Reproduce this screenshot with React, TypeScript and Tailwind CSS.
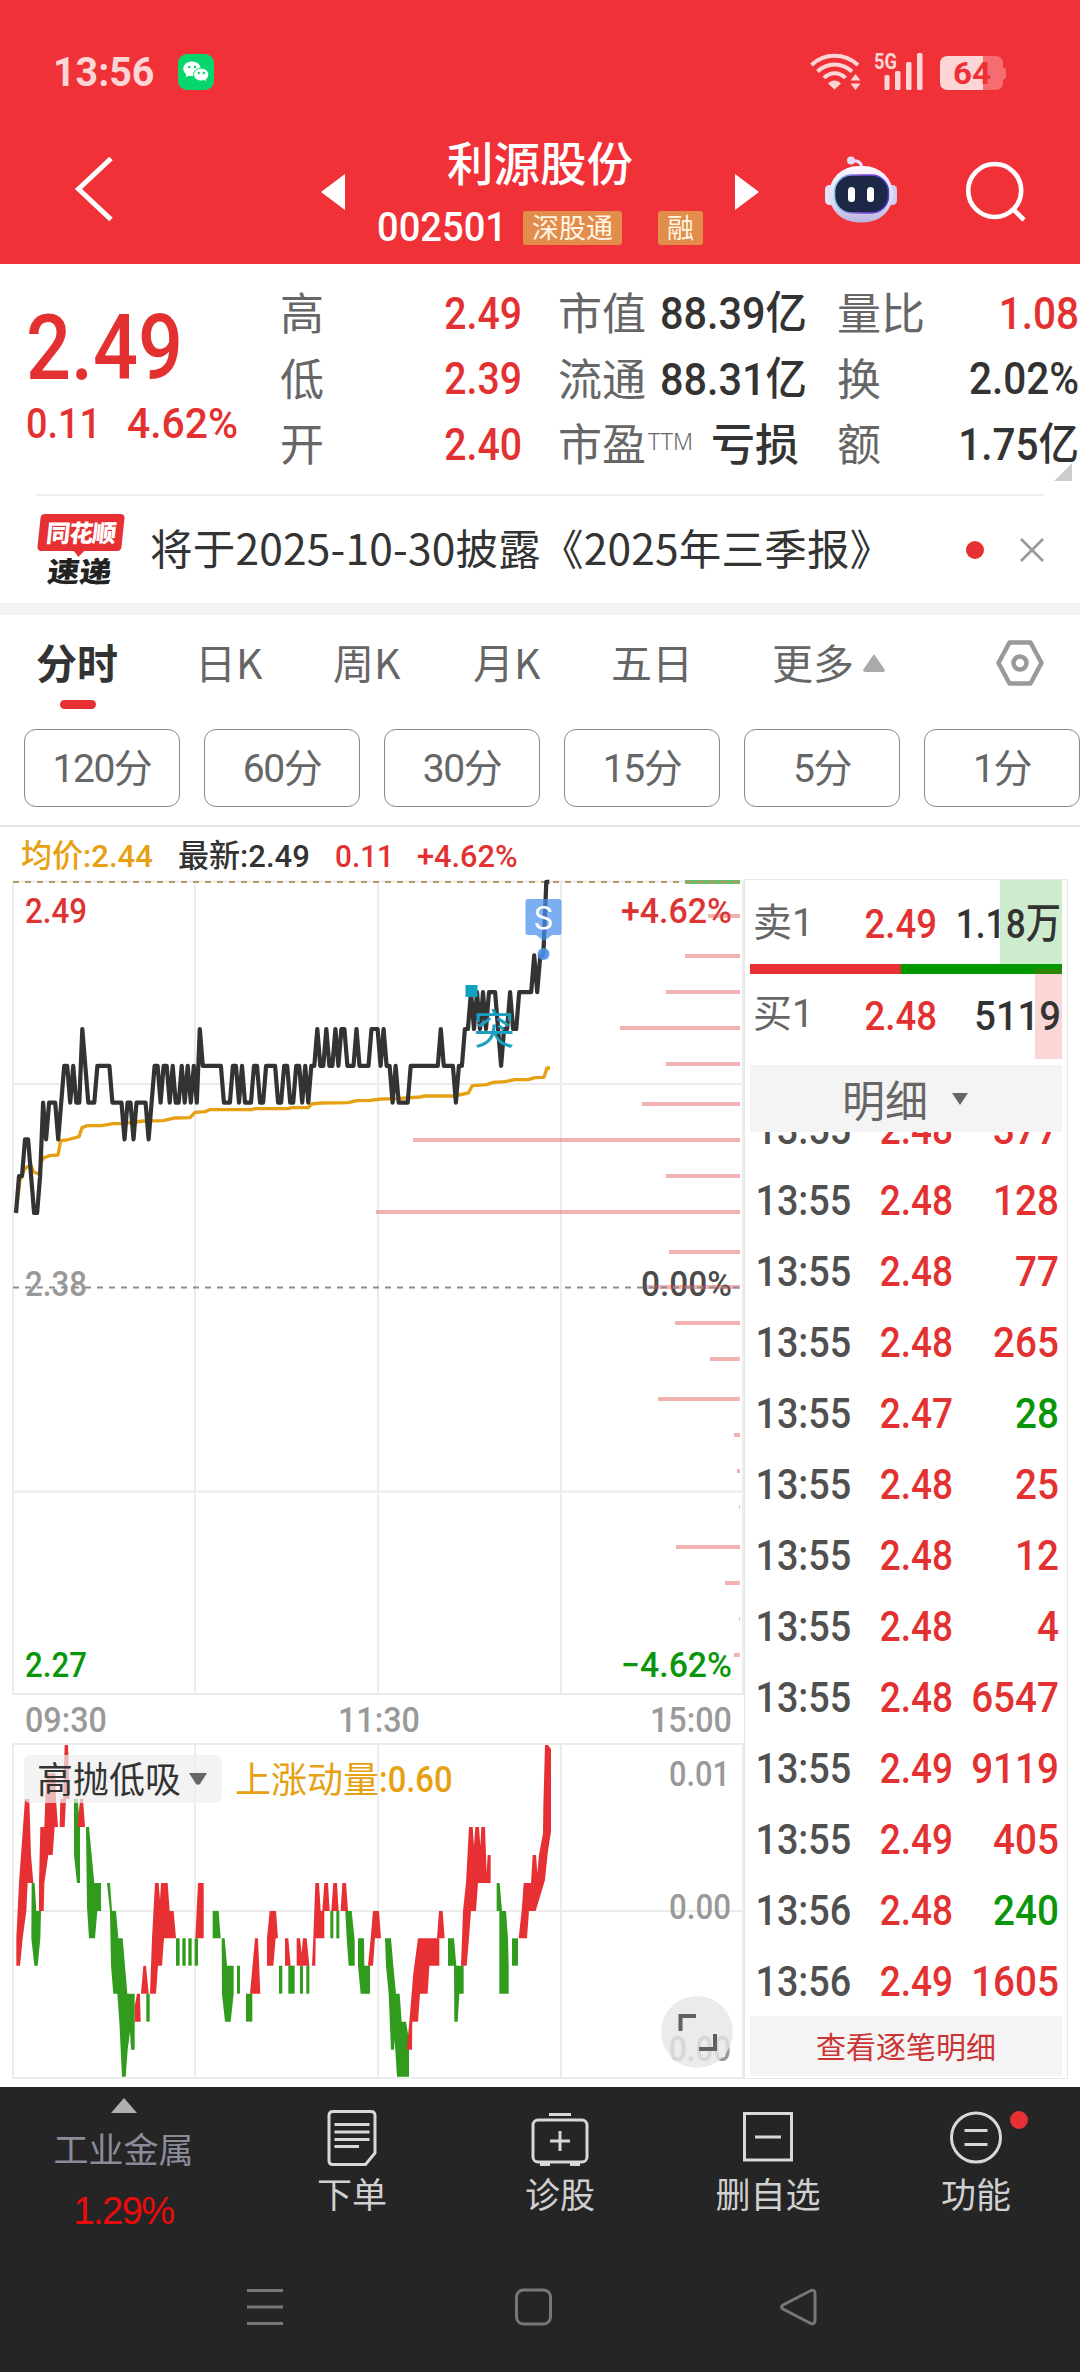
import clsx from 'clsx'
import type { ReactNode } from 'react'

const SANS = "font-['Noto_Sans_CJK_SC',sans-serif]"
const DIGITS = "font-['Roboto','Noto_Sans_CJK_SC',sans-serif]"

interface NumProps {
  children: ReactNode
  className?: string
  squeeze?: string
  from?: 'left' | 'right'
}

// Condensed figures, squeezed towards the side they are aligned to
function Num({ children, className, squeeze = 'scale-x-[.88]', from = 'left' }: NumProps) {
  return (
    <span
      className={clsx(
        DIGITS,
        'inline-block whitespace-nowrap',
        squeeze,
        from === 'left' ? 'origin-left' : 'origin-right',
        className ?? '',
        !className?.includes('font-bold') && 'font-medium',
      )}
    >
      {children}
    </span>
  )
}

// Last price of every minute since the open, in cents above 2.40
const MINUTES =
  '0112210013' +
  '2333234434' +
  '3354333444' +
  '4433332332' +
  '3333234434' +
  '4343343434' +
  '3544444443' +
  '3344343334' +
  '4334444334' +
  '4334434344' +
  '5445445455' +
  '4445444455' +
  '5454434333' +
  '3444444444' +
  '4544443445' +
  '5656565666' +
  '5455655666' +
  '66767799'

const pricePoints = MINUTES.split('')
  .map((c, i) => `${(16 + i * 3.013).toFixed(1)},${(334 - Number(c) * 36.8).toFixed(1)}`)
  .join(' ')

const AVERAGE =
  '48,1058 60,960 75,925 93,915 100,935 118,943 124,905 132,893 150,887 174,885 182,842 200,840 237,830 246,803 262,797 305,797 340,791 365,791 430,783 490,782 525,774 570,773 585,757 615,755 628,749 755,749 765,746 865,746 875,743 925,743 935,732 965,729 1045,728 1070,722 1110,721 1145,717 1190,716 1260,711 1275,708 1360,708 1405,699 1417,677 1460,674 1480,667 1515,665 1545,659 1585,659 1605,653 1632,652 1641,624 1650,624'

// Volume by price: [y, left edge]
const VOLUME: [number, number][] = [
  [37, 708], [77, 685], [113, 666], [149, 620], [185, 666], [225, 642], [261, 413],
  [297, 666], [333, 376], [373, 669], [408, 647], [444, 675], [480, 710], [520, 658],
  [556, 734], [592, 737], [628, 739], [668, 676], [704, 725], [740, 739], [776, 734],
]

const RISE = [
  '49,977 49,895 57,729 63,645 75,477 88,477 93,645 100,729 83,729 79,813 68,895 60,977',
  '117,813 117,729 121,561 133,561 136,477 140,400 166,400 168,477 174,561 164,561 158,645 145,645 133,729 131,813',
  '179,561 181,477 189,477 194,315 204,315 209,477 198,477 194,561',
  '233,561 240,477 249,477 255,561',
  '404,1145 404,1100 411,1061 420,1061 422,1145',
  '423,1061 430,977 438,977 446,1061',
  '450,1061 456,895 465,729 476,729 480,780 483,729 503,729 509,813 521,813 528,895 492,895 486,977 474,977 468,1061',
  '586,895 594,729 611,729 611,895',
  '750,1061 765,895 774,895 781,1061',
  '801,977 801,895 809,813 828,813 834,895 827,895 820,977',
  '855,977 855,895 865,895 872,977',
  '890,977 890,895 900,895 905,940 909,895 920,895 928,977',
  '936,977 940,895 946,729 957,729 962,813 973,813 973,895 947,895 946,977',
  '967,813 973,729 984,729 989,813',
  '994,813 1000,729 1011,729 1016,813',
  '1022,813 1027,729 1038,729 1044,813',
  '1104,977 1112,895 1119,813 1137,813 1143,895 1125,895 1119,977',
  '1220,1229 1228,1145 1240,1000 1254,895 1318,895 1318,977 1288,977 1283,1061 1260,1061 1254,1145 1237,1145 1236,1229',
  '1311,895 1317,813 1328,813 1334,895',
  '1383,977 1389,813 1398,729 1407,561 1418,561 1422,617 1426,561 1437,561 1441,617 1444,561 1455,561 1460,700 1463,645 1472,645 1472,729 1434,729 1428,813 1413,813 1407,895 1400,977',
  '1556,895 1565,813 1571,729 1593,729 1598,645 1608,645 1612,700 1617,645 1629,580 1630,500 1635,315 1644,315 1653,327 1653,575 1643,640 1635,720 1607,813 1587,813 1581,895',
]

const FALL = [
  '95,729 104,729 109,813 123,813 121,895 113,977 103,977 94,895',
  '222,477 233,477 240,560 240,729 231,729 222,645',
  '258,561 267,561 275,645 283,729 303,729 303,813 292,813 285,895 267,895 261,800',
  '321,729 330,729 336,813 348,813 355,895 368,895 375,977 382,1061 404,1061 404,1229 393,1229 390,1175 383,1229 377,1310 366,1310 358,1145 352,1061 340,1061 333,977 330,813',
  '528,895 539,895 539,977 528,977',
  '547,895 557,895 557,977 547,977',
  '565,895 575,895 575,977 565,977',
  '584,895 594,895 594,977 584,977',
  '711,977 720,977 720,1061 711,1061',
  '837,977 847,977 847,1061 837,1061',
  '865,977 884,977 884,1061 865,1061',
  '900,977 909,977 909,1061 900,1061',
  '919,977 928,977 928,1061 919,1061',
  '439,1061 449,1061 449,1145 439,1145',
  '738,1061 757,1061 757,1145 738,1145',
  '991,813 1000,813 1000,895 991,895',
  '1009,813 1018,813 1018,895 1009,895',
  '638,895 638,813 656,813 662,895',
  '665,895 674,895 681,977 701,977 701,1061 692,1145 675,1145 666,1061',
  '1036,813 1055,813 1064,900 1064,977 1046,977 1040,895',
  '1074,895 1092,895 1093,977 1110,977 1110,1061 1082,1061 1074,977',
  '1155,895 1173,895 1180,977 1188,1061 1199,1061 1205,1145 1218,1145 1227,1200 1227,1310 1191,1310 1184,1200 1182,1229 1173,1229 1166,1061 1158,977',
  '1344,895 1362,895 1369,977 1391,977 1391,1061 1378,1061 1373,1145 1363,1145 1362,977 1344,977',
  '1490,729 1499,729 1506,813 1518,813 1524,895 1526,977 1526,1061 1498,1061 1498,813 1490,813',
  '1536,895 1554,895 1554,977 1536,977',
]

interface LabelProps {
  x: number
  y: number
  width: number
  fill: string
  children: string
}

function ChartLabel({ x, y, width, fill, children }: LabelProps) {
  return (
    <text x={x} y={y} textLength={width} lengthAdjust="spacingAndGlyphs" fill={fill} className={clsx(DIGITS, 'text-[35px] font-medium')}>
      {children}
    </text>
  )
}

function StatusBar() {
  return (
    <div className="flex h-[96px] items-end pr-[74px] pb-[6px] pl-[53px] text-[#fcd5d7]">
      <Num squeeze="scale-x-[.96]" className="w-[125px] text-[41px] leading-[36px] font-bold">13:56</Num>
      <div className="size-9 rounded-[9px] bg-[#06d66b]">
        <svg viewBox="0 0 36 36" className="size-9">
          <path d="M14 7.5c-5 0-8.7 3.200-8.700 7.300 0 2.300 1.200 4.300 3 5.700l-.7 2.700 3-1.500c1 .3 2.200.5 3.400.5 5 0 8.800-3.200 8.800-7.400S19 7.500 14 7.500z" fill="#fff" />
          <circle cx="11.200" cy="13" r="1.300" fill="#06d66b" />
          <circle cx="17" cy="13" r="1.300" fill="#06d66b" />
          <path d="M23.200 14.200c-4.400 0-7.600 2.700-7.600 6.400s3.200 6.400 7.600 6.400c1 0 2-.2 2.900-.4l2.600 1.400-.7-2.400c1.700-1.200 2.800-3 2.800-5 0-3.700-3.300-6.400-7.600-6.400z" fill="#fff" stroke="#06d66b" />
          <circle cx="20.700" cy="19" r="1.200" fill="#06d66b" />
          <circle cx="25.800" cy="19" r="1.200" fill="#06d66b" />
        </svg>
      </div>
      <svg viewBox="0 0 196 38" className="ml-auto h-[38px] w-[196px] overflow-visible" fill="#fcd5d7">
        <g fill="none" stroke="#fcd5d7" strokeWidth="4">
          <path d="M1.500 13C14 .5 35 .5 48 13" />
          <path d="M7.500 19.500C17 10 32 10 42 19.500" />
          <path d="M14 26C20 19.500 29.500 19.500 35.500 26" />
        </g>
        <path d="M18 31.500c4-4 9-4 13 0l-6.500 6z" />
        <path d="M45.500 22l5 6.500h-10zM45.500 38l5-6.500h-10z" />
        <text x="64" y="17" textLength="23" lengthAdjust="spacingAndGlyphs" className={clsx(DIGITS, 'text-[22px] font-bold')}>5G</text>
        <rect x="74.500" y="23" width="5" height="15" rx="1.500" />
        <rect x="85" y="19" width="5.500" height="19" rx="1.500" />
        <rect x="96" y="10" width="5.500" height="28" rx="1.500" />
        <rect x="107" y="1" width="5.500" height="37" rx="1.500" />
        <path d="M138 4h35v34h-35q-8 0-8-8V12q0-8 8-8z" />
        <path d="M173 4h12q8 0 8 8v3l3 2v9l-3 2v2q0 8-8 8h-12z" fill="#f66d71" />
        <text x="143" y="32" textLength="38" lengthAdjust="spacingAndGlyphs" fill="#f03037" className={clsx(DIGITS, 'text-[31px] font-bold')}>64</text>
      </svg>
    </div>
  )
}

function Header() {
  return (
    <header className="flex h-[264px] flex-col bg-[#f13138]">
      <StatusBar />
      <div className="flex h-[168px] items-start text-white">
        <svg viewBox="0 0 40 68" className="mt-[59px] ml-[74px] h-[68px] w-10" fill="none" stroke="#fff" strokeWidth="5">
          <path d="M37 3.500L4.500 34 37 64.500" />
        </svg>
        <svg viewBox="0 0 24 36" className="mt-[78px] ml-[207px] h-9 w-6" fill="#fff">
          <path d="M24 0v36L0 18z" />
        </svg>
        <div className="flex w-[390px] flex-col items-center">
          <h1 className={clsx(SANS, 'mt-[40px] text-[46.500px] leading-[50px] font-medium')}>利源股份</h1>
          <div className={clsx(SANS, 'mt-[25px] flex h-[34px] w-full items-center pl-[32px] text-[27px] text-[#fff6e4]')}>
            <Num squeeze="scale-x-[.93]" className="w-[146px] text-[41px] text-white">002501</Num>
            <span className="flex h-[34px] w-[99px] items-center justify-center rounded-[3px] bg-[#e28d4b] leading-[32px] pb-[2px]">深股通</span>
            <span className="ml-9 flex h-[34px] w-[45px] items-center justify-center rounded-[3px] bg-[#e28d4b] leading-[32px] pb-[2px]">融</span>
          </div>
        </div>
        <svg viewBox="0 0 24 36" className="mt-[78px] h-9 w-6" fill="#fff">
          <path d="M0 0v36l24-18z" />
        </svg>
        <svg viewBox="0 0 72 68" className="mt-[59px] ml-[66px] h-[68px] w-[72px]">
          <defs>
            <linearGradient id="shell" x1="0" y1="0" x2="0" y2="1">
              <stop offset="0" stopColor="#fdf8ff" />
              <stop offset=".7" stopColor="#d9d6f2" />
              <stop offset="1" stopColor="#b9b4dd" />
            </linearGradient>
            <linearGradient id="rim" x1="0" y1="0" x2="1" y2="0">
              <stop offset="0" stopColor="#7fd6f2" />
              <stop offset=".5" stopColor="#8a4de0" />
              <stop offset="1" stopColor="#4a3fe0" />
            </linearGradient>
          </defs>
          <path d="M26 6c6-1 10.500 1 11 7" fill="none" stroke="#e6dff5" strokeWidth="3" />
          <circle cx="26" cy="5.500" r="4" fill="#e3def5" />
          <rect x="0" y="30" width="10" height="20" rx="4.500" fill="#e4e2f7" />
          <rect x="62" y="30" width="10" height="20" rx="4.500" fill="#cfcdf0" />
          <rect x="4" y="11" width="64" height="56.500" rx="29" fill="url(#shell)" />
          <rect x="9.500" y="20" width="54" height="38" rx="17" fill="#1d2746" stroke="url(#rim)" strokeWidth="1.500" />
          <rect x="23" y="32" width="7" height="15" rx="3.500" fill="#fff" />
          <rect x="42" y="32" width="7" height="15" rx="3.500" fill="#fff" />
        </svg>
        <svg viewBox="0 0 62 62" className="mt-[65px] ml-[68px] h-[62px] w-[62px]" fill="none" stroke="#fff" strokeWidth="4.600">
          <circle cx="29.700" cy="29.500" r="26.500" />
          <path d="M48 48l11 11" />
        </svg>
      </div>
    </header>
  )
}

const QUOTE = [
  { range: ['高', '2.49'], cap: ['市值', '88.39亿'], flow: ['量比', '1.08'], hot: true },
  { range: ['低', '2.39'], cap: ['流通', '88.31亿'], flow: ['换', '2.02%'], hot: false },
  { range: ['开', '2.40'], cap: ['市盈', '亏损'], flow: ['额', '1.75亿'], hot: false },
]

function QuotePanel() {
  return (
    <section className="flex h-[230px] pt-[17px] text-[#e33131]">
      <div className="w-[280px] pl-[26px]">
        <Num className="mt-[29px] block text-[90px] leading-[78px]">2.49</Num>
        <div className="mt-[15px] flex text-[43px] leading-[40px]">
          <Num className="w-[101px]">0.11</Num>
          <Num squeeze="scale-x-[.95]">4.62%</Num>
        </div>
      </div>
      <div className="relative flex-1">
        {QUOTE.map((row) => (
          <div key={row.range[0]} className={clsx(SANS, 'flex h-[65.500px] items-center text-[44px] leading-none text-[#666]')}>
            <span className="w-[120px] pb-[5px]">{row.range[0]}</span>
            <Num from="right" className="w-[122px] text-right text-[44.500px] text-[#e33131]">{row.range[1]}</Num>
            <span className="ml-[36px] w-[90px] pb-[5px] whitespace-nowrap">{row.cap[0]}</span>
            <span className="w-0">
              {row.cap[0] === '市盈' && <sup className="-top-[14px] font-['Noto_Sans',sans-serif] text-[23px] font-light">TTM</sup>}
            </span>
            {row.cap[1] === '亏损' ? (
              <span className="w-[151px] pb-[5px] text-right font-medium text-[#333]">{row.cap[1]}</span>
            ) : (
              <Num from="right" squeeze="scale-x-[.92]" className="w-[149px] text-right text-[45px] text-[#333]">{row.cap[1]}</Num>
            )}
            <span className={clsx('w-[100px] pb-[5px] whitespace-nowrap', row.cap[1] === '亏损' ? 'ml-[38px]' : 'ml-[40px]')}>{row.flow[0]}</span>
            <Num from="right" squeeze="scale-x-[.91]" className={clsx('w-[142px] text-right text-[44.500px]', row.hot ? 'scale-x-[.88] text-[#e33131]' : 'text-[#333]')}>
              {row.flow[1]}
            </Num>
          </div>
        ))}
        <svg viewBox="0 0 18 18" className="absolute right-2 bottom-[13px] size-[18px]" fill="#ccc">
          <path d="M18 0v18H0z" />
        </svg>
      </div>
    </section>
  )
}

function NewsBar() {
  return (
    <section className="mx-9 flex h-[109px] items-center border-t-2 border-[#eee]">
      <div className="flex w-[89px] flex-col items-center">
        <div className="relative h-[37px] w-[84px] -skew-x-6 rounded-[4px] bg-[#e63033] text-center">
          <span className={clsx(SANS, 'block text-[24px] leading-[35px] font-black tracking-[-1px] text-white')}>同花顺</span>
          <svg viewBox="0 0 12 7" className="absolute top-[36px] left-[36px] h-[7px] w-3" fill="#e63033">
            <path d="M0 0h12L6 7z" />
          </svg>
        </div>
        <span className={clsx(SANS, 'mt-[3px] -skew-x-6 scale-y-[.88] text-[32px] leading-[32px] font-black text-[#222]')}>速递</span>
      </div>
      <p className={clsx(SANS, 'ml-[25px] w-[816px] pb-[4px] text-[42.500px] leading-none tracking-[.2px] whitespace-nowrap text-[#333]')}>
        将于2025-10-30披露《2025年三季报》
      </p>
      <i className="size-[18px] rounded-full bg-[#e63033]" />
      <svg viewBox="0 0 24 24" className="ml-auto size-6" stroke="#999" strokeWidth="2.600">
        <path d="M1 1l22 22M23 1L1 23" />
      </svg>
    </section>
  )
}

const PERIODS = ['120分', '60分', '30分', '15分', '5分', '1分']

function Tabs() {
  return (
    <nav className="h-[212px] border-b-2 border-[#e6e6e6]">
      <div className={clsx(SANS, 'flex h-[96px] items-center pr-9 pl-9 text-[41px] leading-none whitespace-nowrap text-[#666]')}>
        <span className="relative w-[159px] pb-[3px] font-bold text-[#333]">
          分时
          <i className="absolute top-[59px] left-[24px] h-[9px] w-9 rounded-full bg-[#e63033]" />
        </span>
        <span className="w-[138px] pb-[3px]">日K</span>
        <span className="w-[140px] pb-[3px]">周K</span>
        <span className="w-[138px] pb-[3px]">月K</span>
        <span className="w-[161px] pb-[3px]">五日</span>
        <span className="pb-[3px]">更多</span>
        <svg viewBox="0 0 22 18" className="ml-[9px] h-[18px] w-[22px]" fill="#aaa">
          <path d="M11 0l11 16q0 2-2 2H2q-2 0-2-2z" />
        </svg>
        <svg viewBox="0 0 48 46" className="ml-auto h-[46px] w-12" fill="none" stroke="#999" strokeWidth="4.500" strokeLinejoin="round">
          <path d="M13.500 2.500h21L45.500 23l-11 20.500h-21L2.500 23z" />
          <circle cx="24" cy="23" r="6.500" />
        </svg>
      </div>
      <div className="mt-[18px] flex gap-6 pl-6">
        {PERIODS.map((p) => (
          <button
            key={p}
            className={clsx(DIGITS, 'h-[78px] w-[156px] shrink-0 rounded-[12px] border border-[#888] pt-[3px] text-[39px] leading-none tracking-[-1.500px] text-[#666]')}
          >
            {p}
          </button>
        ))}
      </div>
    </nav>
  )
}

function Legend() {
  return (
    <div className={clsx(DIGITS, 'flex h-[52px] items-center pt-[6px] pl-[21px] text-[32px] leading-none font-medium whitespace-nowrap text-[#e33131]')}>
      <span className="w-[157px] origin-left scale-x-[.97] text-[#e6a012]">均价:2.44</span>
      <span className="w-[157px] origin-left scale-x-[.97] text-[#333]">最新:2.49</span>
      <Num squeeze="scale-x-[.93]" className="w-[82px]">0.11</Num>
      <Num squeeze="scale-x-[.96]">+4.62%</Num>
    </div>
  )
}

function PriceChart() {
  return (
    <svg viewBox="0 0 744 818" className="block h-[818px] w-[744px]">
      <g stroke="#ececec" strokeWidth="2" fill="none">
        <path d="M13 2.500H744M13 205H744M13 612.500H744M13 815H744" />
        <path d="M13 2V816M195 2V816M378 2V816M561 2V816M743 2V816" />
      </g>
      <ChartLabel x={25} y={44} width={62} fill="#dc3333">2.49</ChartLabel>
      <ChartLabel x={621} y={44} width={111} fill="#dc3333">+4.62%</ChartLabel>
      <ChartLabel x={25} y={417} width={62} fill="#999">2.38</ChartLabel>
      <ChartLabel x={641} y={417} width={91} fill="#4a4a4a">0.00%</ChartLabel>
      <ChartLabel x={25} y={798} width={62} fill="#0a960a">2.27</ChartLabel>
      <ChartLabel x={621} y={798} width={111} fill="#0a960a">−4.62%</ChartLabel>
      <g stroke="#e04848" strokeOpacity=".42" strokeWidth="4">
        {VOLUME.map(([y, x]) => (
          <path key={y} d={`M${x} ${y}H740`} />
        ))}
        <path d="M685 3H740" stroke="#0a960a" strokeOpacity=".6" />
      </g>
      <path d="M13 3H740" stroke="#b59a68" strokeWidth="2" strokeDasharray="6 6" />
      <path d="M13 408.500H740" stroke="#8d8d8d" strokeWidth="2" strokeDasharray="6 6" />
      <g transform="translate(0 -19) scale(.33333)">
        <polyline points={AVERAGE} fill="none" stroke="#e6a012" strokeWidth="10" strokeLinejoin="round" />
      </g>
      <polyline points={pricePoints} fill="none" stroke="#333" strokeWidth="4.200" strokeLinejoin="round" />
      <rect x="465.500" y="106" width="12" height="12" fill="#12a1c2" />
      <text x="473.500" y="165" fill="#17a0c0" className={clsx(SANS, 'text-[41px]')}>突</text>
      <path d="M528 20h31q2.500 0 2.500 2.500v31q0 2.500-2.500 2.500h-7l-8 6-8-6h-8q-2.500 0-2.500-2.500v-31q0-2.500 2.500-2.500z" fill="#4a90ec" fillOpacity=".72" />
      <text x="543.500" y="49.500" textAnchor="middle" fill="#fff" className="font-['Inter',sans-serif] text-[31px]">S</text>
      <circle cx="543.500" cy="75" r="6" fill="#4a90e8" fillOpacity=".9" />
    </svg>
  )
}

function MomentumChart() {
  return (
    <div className="relative h-[338px]">
      <svg viewBox="0 0 744 338" className="block h-[338px] w-[744px]">
        <g stroke="#ececec" strokeWidth="2" fill="none">
          <path d="M13 2H744M13 169H744M13 336H744" />
          <path d="M13 2V336M195 2V336M378 2V336M561 2V336M743 2V336" />
        </g>
        <g transform="translate(0 -102) scale(.33333)">
          {FALL.map((p) => (
            <polygon key={p} points={p} fill="#319b1d" />
          ))}
          {RISE.map((p) => (
            <polygon key={p} points={p} fill="#e63033" />
          ))}
        </g>
        <ChartLabel x={669} y={44} width={61} fill="#999">0.01</ChartLabel>
        <ChartLabel x={669} y={177} width={62} fill="#999">0.00</ChartLabel>
        <ChartLabel x={669} y={319} width={62} fill="#999">0.00</ChartLabel>
      </svg>
      <div className={clsx(DIGITS, 'absolute top-[13px] left-6 flex items-center text-[36px] leading-none whitespace-nowrap text-[#333]')}>
        <span className="flex h-12 w-[198px] items-center rounded-[6px] bg-[#eee]/70 pl-[13px]">
          <span className="w-[152px] pt-[4px]">高抛低吸</span>
          <svg viewBox="0 0 18 12" className="h-3 w-[18px]" fill="#666">
            <path d="M0 0h18L11 11q-2 1.500-4 0z" />
          </svg>
        </span>
        <span className="ml-[13px] pt-[4px] text-[#e6a012]">上涨动量</span>
        <Num squeeze="scale-x-[.91]" className="pt-[2px] text-[#e6a012]">:0.60</Num>
      </div>
      <svg viewBox="0 0 72 72" className="absolute top-[254px] left-[661px] size-[72px]">
        <circle cx="36" cy="36" r="36" fill="#e6e6e6" fillOpacity=".8" />
        <path d="M19.500 35V20H35M54 38V53H38" fill="none" stroke="#606060" strokeWidth="4" />
      </svg>
    </div>
  )
}

interface Trade {
  time: string
  price: string
  volume: string
  sell?: boolean
}

const TRADES: Trade[] = [
  { time: '13:55', price: '2.48', volume: '377' },
  { time: '13:55', price: '2.48', volume: '128' },
  { time: '13:55', price: '2.48', volume: '77' },
  { time: '13:55', price: '2.48', volume: '265' },
  { time: '13:55', price: '2.47', volume: '28', sell: true },
  { time: '13:55', price: '2.48', volume: '25' },
  { time: '13:55', price: '2.48', volume: '12' },
  { time: '13:55', price: '2.48', volume: '4' },
  { time: '13:55', price: '2.48', volume: '6547' },
  { time: '13:55', price: '2.49', volume: '9119' },
  { time: '13:55', price: '2.49', volume: '405' },
  { time: '13:56', price: '2.48', volume: '240', sell: true },
  { time: '13:56', price: '2.49', volume: '1605' },
]

interface BookRowProps {
  side: string
  price: string
  volume: string
  squeeze: string
}

function BookRow({ side, price, volume, squeeze }: BookRowProps) {
  return (
    <>
      <span className={clsx(DIGITS, 'w-[88px] pt-[3px] pl-[3px] text-[39px] text-[#666]')}>{side}</span>
      <Num from="right" className="w-[99px] pt-[3px] text-right text-[41.500px] text-[#e33131]">{price}</Num>
      <Num from="right" squeeze={squeeze} className="relative w-[124px] pt-[3px] text-right text-[41.500px] text-[#333]">{volume}</Num>
    </>
  )
}

function OrderPanel() {
  return (
    <aside className="flex h-[1200px] w-[324px] flex-col border border-[#e8e8e8] px-[5px] leading-none">
      <div className="relative flex h-[84px] items-center">
        <i className="absolute right-0 h-[84px] w-[62px] bg-[#cdebcd]" />
        <BookRow side="卖1" price="2.49" volume="1.18万" squeeze="scale-x-[.85]" />
      </div>
      <div className="flex h-[10px]">
        <i className="w-[151px] bg-[#e63033]" />
        <i className="flex-1 bg-[#009a00]" />
      </div>
      <div className="relative flex h-[91px] items-start pt-[18px]">
        <i className="absolute top-[-5px] right-0 h-[90px] w-[27px] bg-[#e63033]/20" />
        <BookRow side="买1" price="2.48" volume="5119" squeeze="scale-x-[.92]" />
      </div>
      <div className={clsx(SANS, 'z-10 flex h-[67px] items-center bg-[#f4f4f4] pl-[92px] text-[43px] text-[#666]')}>
        明细
        <svg viewBox="0 0 16 12" className="ml-[24px] h-3 w-4" fill="#666">
          <path d="M0 0h16L8 12z" />
        </svg>
      </div>
      <div className="h-[884px] overflow-hidden">
        <div className="-mt-[38px] text-[42px]">
          {TRADES.map((t, i) => (
            <div key={i} className="flex h-[71px] items-center">
              <Num squeeze="scale-x-[.9]" className="w-[104px] pl-[6px] text-[#505050]">{t.time}</Num>
              <Num from="right" className="w-[99px] text-right text-[#e33131]">{t.price}</Num>
              <Num from="right" squeeze="scale-x-[.92]" className={clsx('w-[106px] text-right', t.sell ? 'text-[#0a960a]' : 'text-[#e33131]')}>{t.volume}</Num>
            </div>
          ))}
        </div>
      </div>
      <button className={clsx(SANS, 'h-[60px] bg-[#f4f4f4] pb-[3px] text-[30px] leading-none text-[#cc3535]')}>查看逐笔明细</button>
    </aside>
  )
}

interface ActionProps {
  label: string
  className: string
  children: ReactNode
}

function Action({ label, className, children }: ActionProps) {
  return (
    <button className={clsx('flex flex-col items-center', className)}>
      <svg viewBox="0 0 60 60" className="size-[60px] overflow-visible" fill="none" stroke="#d8d8d8" strokeWidth="3">
        {children}
      </svg>
      <span className={clsx(SANS, 'mt-[7px] text-[35px] leading-none whitespace-nowrap text-[#d0d0d0]')}>{label}</span>
    </button>
  )
}

function BottomBar() {
  return (
    <footer className="h-[285px] bg-[#252525]">
      <div className="flex h-[168px] pt-[11px]">
        <div className="flex w-[247px] flex-col items-center">
          <svg viewBox="0 0 26 15" className="h-[15px] w-[26px]" fill="#b0b0b0">
            <path d="M13 0l13 15H0z" />
          </svg>
          <span className={clsx(SANS, 'mt-[17px] text-[35px] leading-none text-[#8b8b99]')}>工业金属</span>
          <span className="mt-[27px] font-['Liberation_Sans',sans-serif] text-[38px] leading-none tracking-[-1.500px] text-[#ec0b0b]">1.29%</span>
        </div>
        <Action label="下单" className="ml-[5px] w-[200px] pt-[10px]">
          <path d="M11 3.500h38q4 0 4 4V45l-9.500 11.500H11q-4 0-4-4v-45q0-4 4-4z" />
          <path d="M12.500 16.500h35M12.500 24h35M12.500 31.500h35M12.500 38.500H37" />
        </Action>
        <Action label="诊股" className="ml-[8px] w-[200px] pt-[10px]">
          <rect x="3" y="12" width="54" height="42" rx="5" />
          <path d="M19 6.500h22M20 33h20M30 23v20M10 56.500h10M40 56.500h10" />
        </Action>
        <Action label="删自选" className="ml-[8px] w-[200px] pt-[10px]">
          <rect x="6.500" y="5.500" width="47" height="46.500" />
          <path d="M17 29h26" />
        </Action>
        <Action label="功能" className="ml-[8px] w-[200px] pt-[10px]">
          <circle cx="30" cy="29.500" r="24.500" />
          <path d="M18.500 22.500h23M18.500 36.500h23" />
          <circle cx="73" cy="12" r="9" fill="#e63033" stroke="none" />
        </Action>
      </div>
      <div className="flex items-center pt-[33px] pl-[247px]">
        <svg viewBox="0 0 570 38" className="h-[38px] w-[570px]" fill="none" stroke="#777" strokeWidth="3">
          <path d="M0 2.500h36M0 19h36M0 35.500h36" />
          <rect x="269.500" y="2" width="34" height="34" rx="7" />
          <path d="M564 2.500L536 17q-3 2 0 4L564 35.500q4 1 4-3v-27q0-4-4-3z" />
        </svg>
      </div>
    </footer>
  )
}

export default function App() {
  return (
    <div className="w-[1080px] overflow-hidden bg-white">
      <Header />
      <QuotePanel />
      <NewsBar />
      <div className="h-3 bg-[#f4f4f4]" />
      <Tabs />
      <Legend />
      <main className="flex h-[1208px]">
        <div className="w-[744px]">
          <PriceChart />
          <svg viewBox="0 0 744 45" className="block h-[45px] w-[744px]">
            <ChartLabel x={25} y={35} width={82} fill="#999">09:30</ChartLabel>
            <ChartLabel x={338} y={35} width={82} fill="#999">11:30</ChartLabel>
            <ChartLabel x={650} y={35} width={82} fill="#999">15:00</ChartLabel>
          </svg>
          <MomentumChart />
        </div>
        <OrderPanel />
      </main>
      <BottomBar />
    </div>
  )
}
